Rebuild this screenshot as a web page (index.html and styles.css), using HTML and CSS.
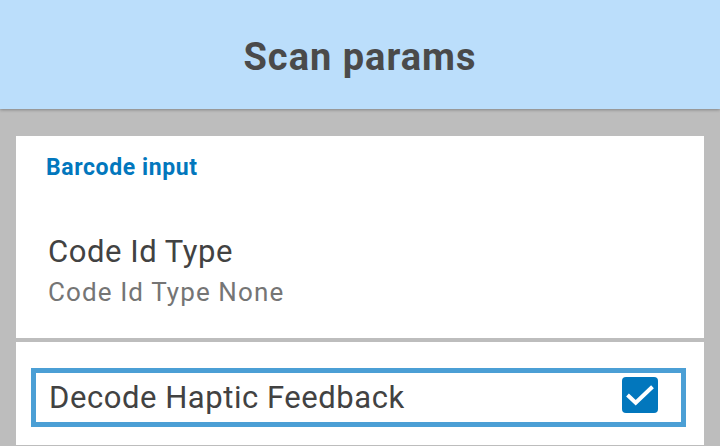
FILE: index.html
```html
<!DOCTYPE html>
<html>
<head>
<meta charset="utf-8">
<link rel="stylesheet" href="styles.css">
</head>
<body>
<header class="appbar"><h1 class="appbar-title">Scan params</h1></header>
<main class="content">
  <section class="card card-first">
    <div class="category">Barcode input</div>
    <div class="pref">
      <div class="pref-title">Code Id Type</div>
      <div class="pref-summary">Code Id Type None</div>
    </div>
  </section>
  <section class="card card-second">
    <div class="focus-row">
      <span class="pref-title">Decode Haptic Feedback</span>
      <span class="checkbox">
        <svg width="36" height="36" viewBox="0 0 36 36"><path d="M5.5 18 L13.7 25.7 L30.5 9.7" fill="none" stroke="#fff" stroke-width="4"/></svg>
      </span>
    </div>
  </section>
</main>
</body>
</html>
```
FILE: styles.css
```css
* { box-sizing: border-box; }
html, body { margin: 0; padding: 0; }
body {
  width: 720px;
  height: 446px;
  overflow: hidden;
  background: #bdbdbd;
  font-family: Roboto, "Liberation Sans", sans-serif;
}
.appbar {
  height: 109px;
  padding-top: 4px;
  background: #bbdefb;
  display: flex;
  align-items: center;
  justify-content: center;
  box-shadow: 0 1px 3px rgba(0,0,0,0.3);
  position: relative;
}
.appbar-title {
  margin: 0;
  font-size: 38px;
  letter-spacing: 1px;
  font-weight: 700;
  color: #4a4a4a;
  line-height: 40px;
}
.content {
  padding: 27px 16px 0;
  display: flex;
  flex-direction: column;
  gap: 4px;
}
.card { background: #fff; }
.card-first {
  height: 202px;
  padding: 19px 0 0 30px;
}
.category {
  font-size: 23px;
  letter-spacing: 0.6px;
  line-height: 26px;
  font-weight: 700;
  color: #0277bd;
}
.pref { padding: 53px 0 0 2px; }
.pref-title {
  font-size: 31px;
  letter-spacing: 0.55px;
  line-height: 36px;
  color: #424242;
}
.pref-summary {
  margin-top: 8px;
  font-size: 26px;
  letter-spacing: 1.1px;
  line-height: 28px;
  color: #757575;
}
.card-second {
  height: 103px;
  padding: 26px 18px 0 15px;
}
.focus-row {
  height: 59px;
  border: 5px solid #4b9fd5;
  display: flex;
  align-items: flex-start;
  justify-content: space-between;
  padding: 7px 23px 0 13px;
}
.checkbox {
  margin-top: -3px;
  width: 36px;
  height: 36px;
  border-radius: 4px;
  background: #0277bd;
  display: block;
}
.checkbox svg { display: block; }
```
